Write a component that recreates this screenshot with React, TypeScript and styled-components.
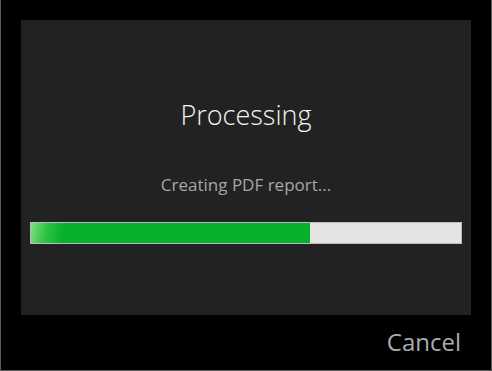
import React from "react";
import styled, { createGlobalStyle } from "styled-components";

const GlobalStyle = createGlobalStyle`
  html, body {
    margin: 0;
    padding: 0;
    background: #000;
  }
  body {
    font-family: "Open Sans", "Noto Sans", "DejaVu Sans", sans-serif;
  }
`;

const Window = styled.div`
  width: 492px;
  height: 371px;
  box-sizing: border-box;
  background: #000;
  border: 1px solid #5a5a5a;
  border-top: none;
  display: flex;
  flex-direction: column;
`;

const Panel = styled.div`
  margin: 20px 20px 0 20px;
  height: 295px;
  background: #222222;
  padding: 0 9px;
  display: flex;
  flex-direction: column;
  align-items: stretch;
`;

const Title = styled.h1`
  margin: 75px 0 0;
  font-size: 27px;
  font-weight: 300;
  line-height: 40px;
  text-align: center;
  color: #f4f4ea;
`;

const Status = styled.div`
  margin-top: 39px;
  font-size: 17px;
  line-height: 22px;
  text-align: center;
  color: #a6a6a6;
`;

const Track = styled.div`
  margin-top: 26px;
  height: 22px;
  box-sizing: border-box;
  border: 1px solid #bcbcbc;
  background: #e4e4e4;
  display: flex;
`;

const Fill = styled.div`
  height: 100%;
  background: linear-gradient(100deg, #7ee07e 0%, #2dc245 6%, #07b02a 12%, #07b02a 100%);
`;

const Footer = styled.div`
  display: flex;
  justify-content: flex-end;
  padding: 10px 30px 0 0;
`;

const CancelButton = styled.button`
  background: none;
  border: none;
  padding: 0;
  font-family: inherit;
  font-size: 24px;
  line-height: 34px;
  color: #a9acb0;
  cursor: pointer;
`;

const App = () => {
  const progress = 64.8;
  return (
    <>
      <GlobalStyle />
      <Window>
        <Panel>
          <Title>Processing</Title>
          <Status>Creating PDF report...</Status>
          <Track>
            <Fill style={{ width: `${progress}%` }} />
          </Track>
        </Panel>
        <Footer>
          <CancelButton>Cancel</CancelButton>
        </Footer>
      </Window>
    </>
  );
};

export default App;
